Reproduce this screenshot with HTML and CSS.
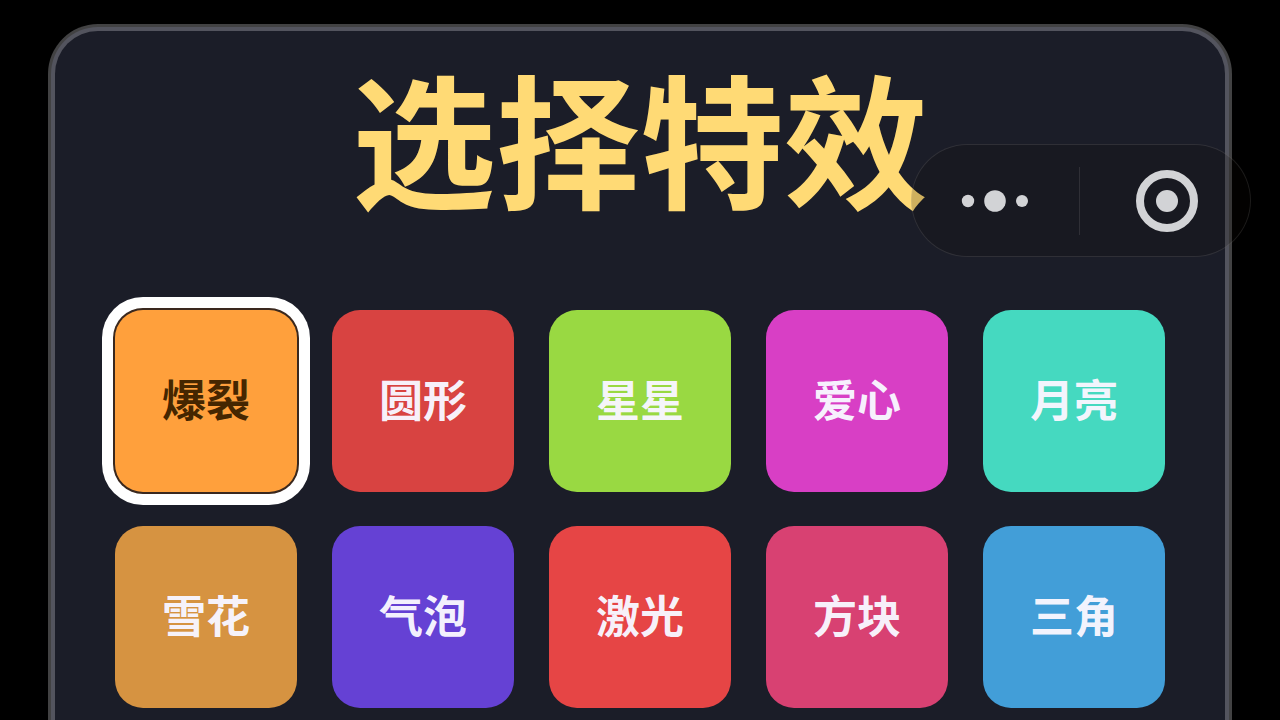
FILE: index.html
```html
<!DOCTYPE html>
<html lang="zh-CN">
<head>
  <meta charset="UTF-8">
  <meta name="viewport" content="width=device-width, initial-scale=1.0">
  <title>选择特效</title>
  <link rel="stylesheet" href="styles.css">
</head>
<body>
  <main class="panel">
    <h1>选择特效</h1>
    <div class="effects">
      <button class="effect burst active" type="button">爆裂</button>
      <button class="effect circle" type="button">圆形</button>
      <button class="effect star" type="button">星星</button>
      <button class="effect heart" type="button">爱心</button>
      <button class="effect moon" type="button">月亮</button>
      <button class="effect snow" type="button">雪花</button>
      <button class="effect bubble" type="button">气泡</button>
      <button class="effect laser" type="button">激光</button>
      <button class="effect square" type="button">方块</button>
      <button class="effect triangle" type="button">三角</button>
    </div>
  </main>

  <div class="capsule">
    <button class="capsule-btn" type="button" aria-label="更多">
      <svg width="68" height="24" viewBox="0 0 68 24" fill="currentColor">
        <circle cx="7" cy="12" r="6.2"/>
        <circle cx="34" cy="12" r="10.8"/>
        <circle cx="61" cy="12" r="6"/>
      </svg>
    </button>
    <span class="divider"></span>
    <button class="capsule-btn close" type="button" aria-label="关闭">
      <svg width="64" height="64" viewBox="0 0 64 64">
        <circle cx="32" cy="32" r="27" fill="none" stroke="currentColor" stroke-width="8"/>
        <circle cx="32" cy="32" r="11" fill="currentColor"/>
      </svg>
    </button>
  </div>

<script>
const effects = document.querySelectorAll('.effect');

effects.forEach(btn => {
    btn.addEventListener('click', () => {
        effects.forEach(b => b.classList.remove('active'));
        btn.classList.add('active');
    });
});
</script>
</body>
</html>
```
FILE: styles.css
```css
* {
  box-sizing: border-box;
}
body {
  display: flex;
  flex-direction: column;
  margin: 0;
  min-height: 100vh;
  padding: 27px 51px 0;
  background: #000;
  font-family: "Noto Sans CJK SC", sans-serif;
}
.panel {
  flex: 1;
  padding: 24px 60px 12px;
  background: #1b1d28;
  border: 4px solid #53545e;
  border-bottom: none;
  border-radius: 47px 47px 0 0;
  box-shadow: 0 0 0 3px #424243;
}
h1 {
  margin: 0 0 95px;
  font-size: 144px;
  line-height: 160px;
  font-weight: 700;
  text-align: center;
  white-space: nowrap;
  color: #ffda75;
}
.effects {
  display: grid;
  grid-template-columns: repeat(5, 1fr);
  gap: 34px 35px;
}
.effect {
  aspect-ratio: 1;
  padding: 0 0 6px;
  border: none;
  border-radius: 28px;
  font-family: inherit;
  font-size: 44px;
  line-height: 64px;
  font-weight: 700;
  color: rgba(248, 246, 255, 0.98);
  cursor: pointer;
}
.effect.active {
  color: #452600;
  box-shadow: 0 0 0 2px #3a281e, 0 0 0 13px #fff;
}
.burst { background: #ffa03c; }
.circle { background: #d84341; }
.star { background: #99d942; }
.heart { background: #d83fc5; }
.moon { background: #45d9c0; }
.snow { background: #d69341; }
.bubble { background: #6541d4; }
.laser { background: #e64545; }
.square { background: #d84172; }
.triangle { background: #429ed8; }

.capsule {
  position: fixed;
  top: 144px;
  right: 29px;
  display: flex;
  align-items: center;
  width: 340px;
  height: 113px;
  background: rgba(14, 8, 4, 0.2);
  border: 1px solid rgba(255, 255, 255, 0.1);
  border-radius: 57px;
}
.capsule-btn {
  flex: 1;
  display: flex;
  justify-content: center;
  padding: 0;
  border: none;
  background: none;
  color: #d2d3d6;
  cursor: pointer;
}
.capsule-btn.close {
  padding-left: 4px;
}
.divider {
  width: 1px;
  height: 68px;
  background: rgba(255, 255, 255, 0.1);
}
```
